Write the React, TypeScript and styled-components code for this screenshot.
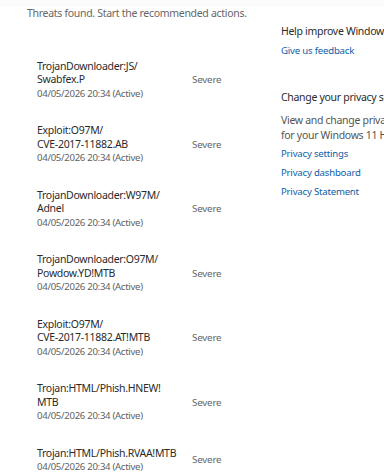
import React from "react";
import styled, { createGlobalStyle } from "styled-components";

const GlobalStyle = createGlobalStyle`
  html, body { margin: 0; padding: 0; background: #ffffff; }
  body { font-family: "Noto Sans", "Open Sans", sans-serif; overflow: hidden; }
`;

const Page = styled.div`
  width: 384px;
  height: 476px;
  overflow: hidden;
  display: grid;
  grid-template-columns: 281px 1fr;
  background: #fff;
  border-top: 7px solid #fcfcfc;
  box-sizing: border-box;
`;

const Main = styled.div`
  display: flex;
  flex-direction: column;
`;

const Subtitle = styled.div`
  padding-left: 27px;
  font-size: 10.5px;
  letter-spacing: -0.3px;
  line-height: 13.5px;
  color: #666;
  white-space: nowrap;
`;

const List = styled.div`
  display: flex;
  flex-direction: column;
  padding-left: 37px;
  margin-top: 28px;
`;

const Row = styled.div`
  display: grid;
  grid-template-columns: 155px auto;
  align-items: center;
  padding: 11px 0 13px;
`;

const Info = styled.div`
  display: flex;
  flex-direction: column;
`;

const Name = styled.div`
  font-size: 10.5px;
  letter-spacing: -0.3px;
  line-height: 13.5px;
  color: #2b2b2b;
  white-space: nowrap;
`;

const DateLine = styled.div`
  font-size: 9.6px;
  letter-spacing: -0.3px;
  line-height: 13.5px;
  color: #5f5f5f;
  white-space: nowrap;
`;

const Severity = styled.div`
  font-size: 9.8px;
  letter-spacing: -0.2px;
  line-height: 13.5px;
  color: #666;
`;

const Side = styled.div`
  display: flex;
  flex-direction: column;
  white-space: nowrap;
  padding-top: 17px;
`;

const Heading = styled.div<{ $gap?: number }>`
  font-size: 10.5px;
  letter-spacing: -0.3px;
  line-height: 15px;
  color: #2b2b2b;
  margin-top: ${(p) => p.$gap ?? 0}px;
`;

const Para = styled.div`
  font-size: 10.5px;
  letter-spacing: -0.3px;
  line-height: 14.5px;
  color: #555;
  margin-top: 8px;
`;

const LinkText = styled.a<{ $gap?: number }>`
  display: block;
  font-size: 9.6px;
  letter-spacing: -0.2px;
  line-height: 15px;
  color: #0f5ea8;
  text-decoration: none;
  margin-top: ${(p) => p.$gap ?? 4}px;
`;

const threats: { name: string[] }[] = [
  { name: ["TrojanDownloader:JS/", "Swabfex.P"] },
  { name: ["Exploit:O97M/", "CVE-2017-11882.AB"] },
  { name: ["TrojanDownloader:W97M/", "Adnel"] },
  { name: ["TrojanDownloader:O97M/", "Powdow.YD!MTB"] },
  { name: ["Exploit:O97M/", "CVE-2017-11882.AT!MTB"] },
  { name: ["Trojan:HTML/Phish.HNEW!", "MTB"] },
  { name: ["Trojan:HTML/Phish.RVAA!MTB"] },
];

export default function App() {
  return (
    <>
      <GlobalStyle />
      <Page>
        <Main>
          <Subtitle>Threats found. Start the recommended actions.</Subtitle>
          <List>
            {threats.map((t, i) => (
              <Row key={i}>
                <Info>
                  {t.name.map((n, j) => (
                    <Name key={j}>{n}</Name>
                  ))}
                  <DateLine>04/05/2026 20:34 (Active)</DateLine>
                </Info>
                <Severity>Severe</Severity>
              </Row>
            ))}
          </List>
        </Main>
        <Side>
          <Heading>Help improve Windows Security</Heading>
          <LinkText href="#">Give us feedback</LinkText>
          <Heading $gap={32}>Change your privacy settings</Heading>
          <Para>
            View and change privacy settings
            <br />
            for your Windows 11 Home device.
          </Para>
          <LinkText href="#" $gap={4}>Privacy settings</LinkText>
          <LinkText href="#">Privacy dashboard</LinkText>
          <LinkText href="#">Privacy Statement</LinkText>
        </Side>
      </Page>
    </>
  );
}
